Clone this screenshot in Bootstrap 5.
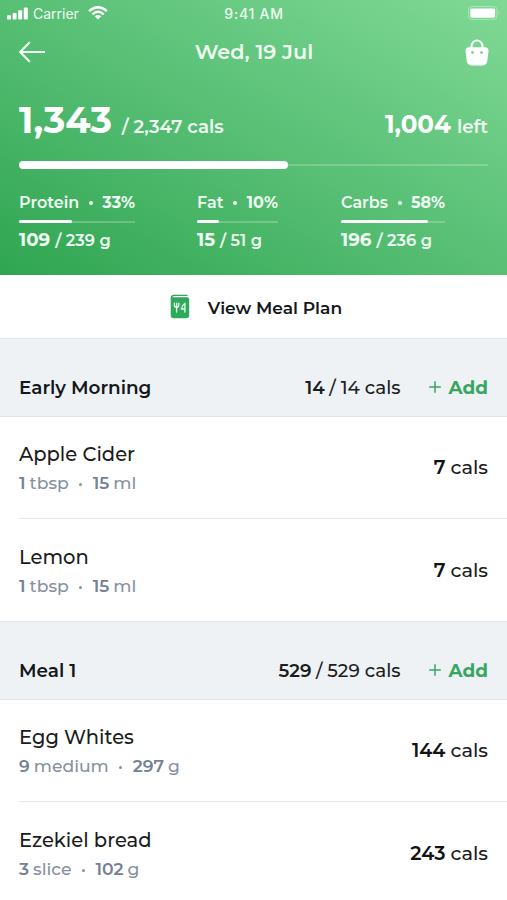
<!DOCTYPE html>
<html lang="en">
<head>
<meta charset="utf-8">
<meta name="viewport" content="width=device-width, initial-scale=1">
<title>Meal diary</title>
<link href="https://cdn.jsdelivr.net/npm/bootstrap@5.3.0/dist/css/bootstrap.min.css" rel="stylesheet">
<style>
body{font-family:Montserrat,Inter,sans-serif;color:#1b1d20;background:#fff;overflow:hidden;height:900px}
svg{display:block;flex:none}
.w5{font-weight:500}.w6{font-weight:600}.w7{font-weight:700}
.hero{height:275px;color:#effdf2;background:linear-gradient(to top right,#2fa551 0%,#58bf75 50%,#80d995 100%)}
.status-bar{height:26px;font:400 14px Inter,sans-serif;padding:0 6px 0 7px}
.status-bar>div{flex:1 1 0}
.carrier{margin-left:5px}
.clock{font-weight:500;letter-spacing:.75px}
.top-nav{height:52px;padding:0 18px 0 19px}
.top-title{font-size:20.8px;margin-right:2px}
.summary{padding:20px 19px 0}
.totals{height:44px;line-height:44px}
.eaten{font-size:36.8px;color:#fff}
.goal{font-size:18.3px;margin-left:9.5px}
.remain{font-size:24.6px;color:#fff}
.remain-label{font-size:18.2px;margin-left:6px}
.day-bar{height:8px;margin-top:19px;background:linear-gradient(rgba(255,255,255,.2),rgba(255,255,255,.2)) center/100% 2px no-repeat}
.day-fill{height:8px;border-radius:4px;background:#fff}
.macros{margin-top:24px;gap:62px}
.macro-label{height:20px;line-height:20px;font-size:16px}
.macro-bar{height:3px;margin:7px 0;background:linear-gradient(rgba(255,255,255,.22),rgba(255,255,255,.22)) center/100% 2px no-repeat}
.macro-fill{height:3px;border-radius:2px;background:#fff}
.macro-value{line-height:20px;gap:5px;font-size:16.3px}
.macro-value b{font-size:18.3px}
.protein{width:116px}.fat{width:81px}.carbs{width:104px;margin-left:1px}
.pip{width:4px;height:4px;border-radius:50%;background:currentColor;flex:none}
.plan{height:63px;font-size:17.1px;padding-left:5px;gap:18px;color:#15171a}
.plan span{padding-top:2px}
.meal-head{height:79px;padding:20px 19px 0;background:#eef2f5;border-top:1px solid #e2e6e9;border-bottom:1px solid #e2e6e9;font-size:18.4px}
.meal-head .name{font-weight:600;color:#15171a}
.tally{gap:4.5px}
.add-link{color:#38a663;margin-left:28px;gap:8px}
.food{height:102px;margin-left:19px;padding-right:19px;border-bottom:1px solid #e6e8eb}
.food.final{border-bottom:0;padding-top:1px}
.food-name{font-size:19.5px;line-height:26px;padding-top:1px}
.food-sub{font-size:17.2px;line-height:24px;margin-top:4px;color:#8791a1}
.food-sub b{font-weight:600;color:#758195}
.food-sub .unit{margin-left:4px;font-weight:500}
.food-sub .pip{width:3px;height:3px;margin:2px 10.5px 0}
.kcal{font-size:19.3px;gap:5px}
.kcal b{font-weight:600;color:#111316}
</style>
<script src="https://cdn.jsdelivr.net/npm/bootstrap@5.3.0/dist/js/bootstrap.bundle.min.js"></script>
</head>
<body>
<header class="hero">
  <div class="status-bar d-flex align-items-center">
    <div class="d-flex align-items-center">
      <svg width="21" height="13" viewBox="0 0 21 13" fill="#fff"><rect x="0" y="8.3" width="4" height="4.2" rx="1"/><rect x="5.6" y="6" width="4" height="6.5" rx="1"/><rect x="11.2" y="3.3" width="4" height="9.2" rx="1"/><rect x="16.8" y=".5" width="4" height="12" rx="1"/></svg>
      <span class="carrier">Carrier</span>
      <svg class="ms-2" width="21" height="14" viewBox="-1 0 21 14"><g fill="none" stroke="#fff" stroke-width="2.3"><path d="M1.1 5.1Q10-2.6 18.9 5.1"/><path d="M4.3 8.4Q10 3.2 15.7 8.4"/></g><path d="M10 13.4L6.8 10.3Q10 7.6 13.2 10.3Z" fill="#fff"/></svg>
    </div>
    <span class="clock">9:41 AM</span>
    <div class="d-flex justify-content-end">
      <svg width="33" height="14" viewBox="0 0 33 14"><rect x=".6" y=".6" width="28.3" height="12.8" rx="3" fill="none" stroke="#fff" stroke-opacity=".35"/><rect x="2.3" y="2.4" width="24.8" height="9.3" rx="1.4" fill="#fff"/><path d="M30.5 4.6Q32.5 7 30.5 9.4Z" fill="#fff" opacity=".4"/></svg>
    </div>
  </div>
  <nav class="top-nav d-flex align-items-center justify-content-between">
    <svg width="26" height="22" viewBox="0 0 26 22" fill="none" stroke="#effdf2" stroke-width="2.1" stroke-linecap="round" stroke-linejoin="round"><path d="M25 11H1.2M10.2 1.8L1.2 11L10.2 20.2"/></svg>
    <h1 class="top-title w6 mb-0">Wed, 19 Jul</h1>
    <svg width="24" height="27" viewBox="0 0 24 27"><path d="M6.5 10V7.1a5.5 5.5 0 0 1 11 0V10" fill="none" stroke="#fff" stroke-width="2"/><path d="M4.1 8.2H19.9Q23.6 8.2 23.5 11.8L22.4 21.5Q21.8 26.3 17.5 26.4H6.5Q2.2 26.3 1.6 21.5L.5 11.8Q.4 8.2 4.1 8.2Z" fill="#fff"/><circle cx="7.5" cy="13.5" r="1.3" fill="#69c984"/><circle cx="16.5" cy="13.5" r="1.3" fill="#69c984"/></svg>
  </nav>
  <section class="summary">
    <div class="totals d-flex align-items-baseline">
      <span class="eaten w7">1,343</span><span class="goal w6">/ 2,347 cals</span>
      <span class="remain w7 ms-auto">1,004</span><span class="remain-label w6">left</span>
    </div>
    <div class="day-bar"><div class="day-fill" style="width:57.3%"></div></div>
    <div class="macros d-flex">
      <div class="protein">
        <div class="macro-label d-flex align-items-center justify-content-between"><span class="w6">Protein</span><i class="pip"></i><span class="w7">33%</span></div>
        <div class="macro-bar"><div class="macro-fill" style="width:46%"></div></div>
        <div class="macro-value d-flex align-items-baseline"><b>109</b><span class="w6">/ 239 g</span></div>
      </div>
      <div class="fat">
        <div class="macro-label d-flex align-items-center justify-content-between"><span class="w6">Fat</span><i class="pip"></i><span class="w7">10%</span></div>
        <div class="macro-bar"><div class="macro-fill" style="width:27%"></div></div>
        <div class="macro-value d-flex align-items-baseline"><b>15</b><span class="w6">/ 51 g</span></div>
      </div>
      <div class="carbs">
        <div class="macro-label d-flex align-items-center justify-content-between"><span class="w6">Carbs</span><i class="pip"></i><span class="w7">58%</span></div>
        <div class="macro-bar"><div class="macro-fill" style="width:83.5%"></div></div>
        <div class="macro-value d-flex align-items-baseline"><b>196</b><span class="w6">/ 236 g</span></div>
      </div>
    </div>
  </section>
</header>
<div class="plan d-flex align-items-center justify-content-center">
  <svg width="20" height="25" viewBox="0 0 20 25"><path d="M.7 4Q.7.7 4 .7H17.6V2H4.2Q2.4 2.3 2.4 3.2H17.2Q19.2 3.2 19.2 5.2V21.2Q19.2 24.2 16.2 24.2H3.7Q.7 24.2.7 21.2Z" fill="#2fa95c"/><g fill="none" stroke="#e6ffee" stroke-width="1.3" stroke-linecap="round" stroke-linejoin="round"><path d="M4.4 9.2V11.6Q4.4 13.4 6.6 13.4Q8.8 13.4 8.8 11.6V9.2M6.6 9.2V18M14.9 18V9.2Q11.8 11.4 11.4 15H14.9"/></g></svg>
  <span class="w6">View Meal Plan</span>
</div>
<main>
  <section>
    <div class="meal-head d-flex align-items-center">
      <span class="name">Early Morning</span>
      <span class="tally d-flex ms-auto"><span class="w6">14</span><span class="w5">/ 14 cals</span></span>
      <a class="add-link d-flex align-items-center text-decoration-none" href="#"><svg width="12" height="12" viewBox="0 0 12 12" stroke="#38a663" stroke-width="1.5"><path d="M6 .2V11.8M.2 6H11.8"/></svg><span class="w7">Add</span></a>
    </div>
    <div class="food d-flex align-items-center">
      <div class="food-info"><div class="food-name w5">Apple Cider</div>
        <div class="food-sub d-flex align-items-center"><b>1</b><span class="unit">tbsp</span><i class="pip"></i><b>15</b><span class="unit">ml</span></div></div>
      <div class="kcal d-flex ms-auto"><b>7</b><span class="w5">cals</span></div>
    </div>
    <div class="food final d-flex align-items-center">
      <div class="food-info"><div class="food-name w5">Lemon</div>
        <div class="food-sub d-flex align-items-center"><b>1</b><span class="unit">tbsp</span><i class="pip"></i><b>15</b><span class="unit">ml</span></div></div>
      <div class="kcal d-flex ms-auto"><b>7</b><span class="w5">cals</span></div>
    </div>
  </section>
  <section>
    <div class="meal-head d-flex align-items-center">
      <span class="name">Meal 1</span>
      <span class="tally d-flex ms-auto"><span class="w6">529</span><span class="w5">/ 529 cals</span></span>
      <a class="add-link d-flex align-items-center text-decoration-none" href="#"><svg width="12" height="12" viewBox="0 0 12 12" stroke="#38a663" stroke-width="1.5"><path d="M6 .2V11.8M.2 6H11.8"/></svg><span class="w7">Add</span></a>
    </div>
    <div class="food d-flex align-items-center">
      <div class="food-info"><div class="food-name w5">Egg Whites</div>
        <div class="food-sub d-flex align-items-center"><b>9</b><span class="unit">medium</span><i class="pip"></i><b>297</b><span class="unit">g</span></div></div>
      <div class="kcal d-flex ms-auto"><b>144</b><span class="w5">cals</span></div>
    </div>
    <div class="food final d-flex align-items-center">
      <div class="food-info"><div class="food-name w5">Ezekiel bread</div>
        <div class="food-sub d-flex align-items-center"><b>3</b><span class="unit">slice</span><i class="pip"></i><b>102</b><span class="unit">g</span></div></div>
      <div class="kcal d-flex ms-auto"><b>243</b><span class="w5">cals</span></div>
    </div>
  </section>
</main>
</body>
</html>
